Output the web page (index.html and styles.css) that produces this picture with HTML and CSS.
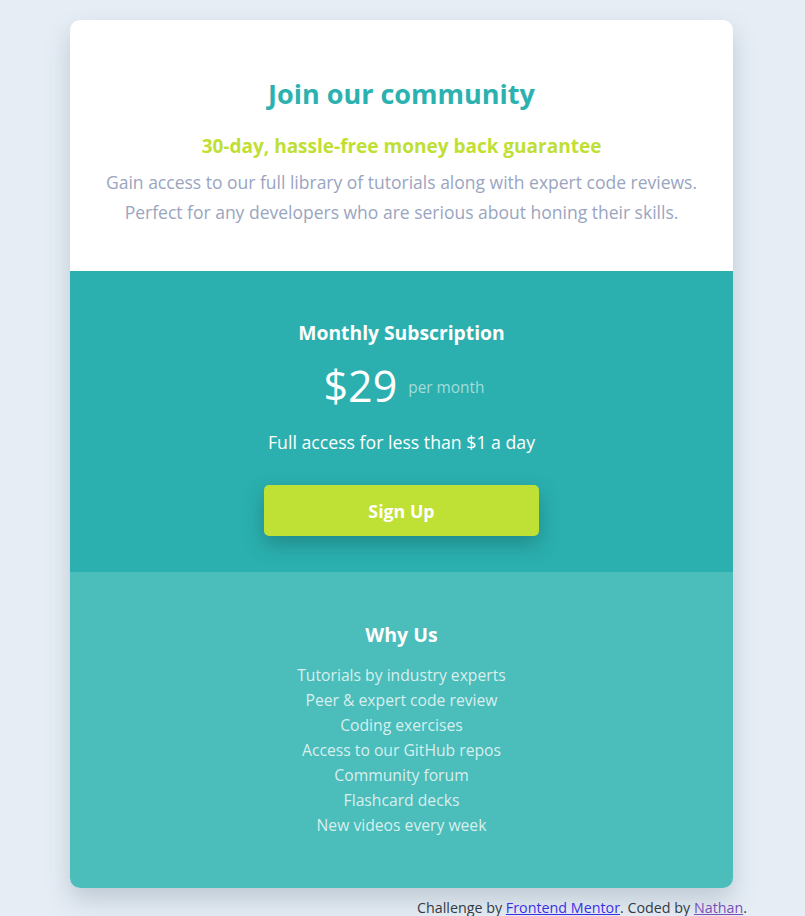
FILE: index.html
```html
<!DOCTYPE html>
<html lang="en">
<head>
<meta charset="utf-8">
<title>Single price grid</title>
<link rel="stylesheet" href="styles.css">
</head>
<body>
<main class="card">
  <section class="intro">
    <h1 class="title">Join our community</h1>
    <h2 class="guarantee">30-day, hassle-free money back guarantee</h2>
    <p class="desc">Gain access to our full library of tutorials along with expert code reviews.<br>Perfect for any developers who are serious about honing their skills.</p>
  </section>
  <section class="subscription">
    <h2 class="sub-title">Monthly Subscription</h2>
    <div class="price-row">
      <span class="price">$29</span>
      <span class="per">per month</span>
    </div>
    <p class="full">Full access for less than $1 a day</p>
    <button class="signup" type="button">Sign Up</button>
  </section>
  <section class="why">
    <h2 class="why-title">Why Us</h2>
    <ul class="why-list">
      <li>Tutorials by industry experts</li>
      <li>Peer &amp; expert code review</li>
      <li>Coding exercises</li>
      <li>Access to our GitHub repos</li>
      <li>Community forum</li>
      <li>Flashcard decks</li>
      <li>New videos every week</li>
    </ul>
  </section>
</main>
<footer class="attribution">
  Challenge by <a href="#">Frontend Mentor</a>. Coded by <a href="#" class="visited">Nathan</a>.
</footer>
</body>
</html>
```

FILE: styles.css
```css
* { box-sizing: border-box; }

html, body {
  margin: 0;
  padding: 0;
}

body {
  background: #e6edf5;
  font-family: "Open Sans", "Liberation Sans", sans-serif;
  padding-top: 20px;
}

.card {
  width: 663px;
  margin: 0 72px 0 70px;
  border-radius: 10px;
  overflow: hidden;
  box-shadow: 0 12px 24px rgba(90, 110, 130, 0.28);
  text-align: center;
}

.intro {
  background: #ffffff;
  height: 251px;
  padding-top: 57px;
}

.title {
  margin: 0;
  color: #2bb1af;
  font-size: 27px;
  font-weight: 700;
  line-height: 34px;
}

.guarantee {
  margin: 22px 0 0;
  color: #bfdf34;
  font-size: 19px;
  font-weight: 700;
  line-height: 26px;
}

.desc {
  margin: 8px auto 0;
  color: #9aa5bf;
  font-size: 17.5px;
  line-height: 30px;
  white-space: nowrap;
}

.subscription {
  background: #2bb0af;
  height: 301px;
  padding-top: 48px;
}

.sub-title {
  margin: 0;
  color: #ffffff;
  font-size: 19.3px;
  font-weight: 700;
  line-height: 28px;
}

.price-row {
  display: flex;
  justify-content: center;
  align-items: center;
  gap: 11px;
  margin-top: 14px;
  padding-left: 5px;
  height: 50px;
}

.price {
  color: #ffffff;
  font-size: 43px;
  line-height: 50px;
}

.per {
  color: #a3dcda;
  font-size: 15.4px;
  line-height: 20px;
  margin-top: 4px;
}

.full {
  margin: 18px 0 0;
  color: #ffffff;
  font-size: 17.7px;
  line-height: 26px;
}

.signup {
  display: block;
  margin: 30px auto 0;
  width: 275px;
  height: 51px;
  border: 0;
  border-radius: 5px;
  background: #bfe034;
  color: #ffffff;
  font-family: inherit;
  font-size: 17.8px;
  font-weight: 700;
  box-shadow: 0 8px 20px rgba(20, 90, 90, 0.45);
}

.why {
  background: #4bbdbb;
  height: 316px;
  padding-top: 50px;
}

.why-title {
  margin: 0;
  color: #ffffff;
  font-size: 19.5px;
  font-weight: 700;
  line-height: 26px;
}

.why-list {
  list-style: none;
  margin: 15px 0 0;
  padding: 0;
  color: #d8efee;
  font-size: 15.7px;
  line-height: 25px;
}

.attribution {
  width: 805px;
  padding-right: 58px;
  text-align: right;
  margin-top: 11px;
  font-size: 14.3px;
  line-height: 17px;
  color: #333a44;
}

.attribution a { color: #3b2fe6; }
.attribution a.visited { color: #7a4fb8; }
```
